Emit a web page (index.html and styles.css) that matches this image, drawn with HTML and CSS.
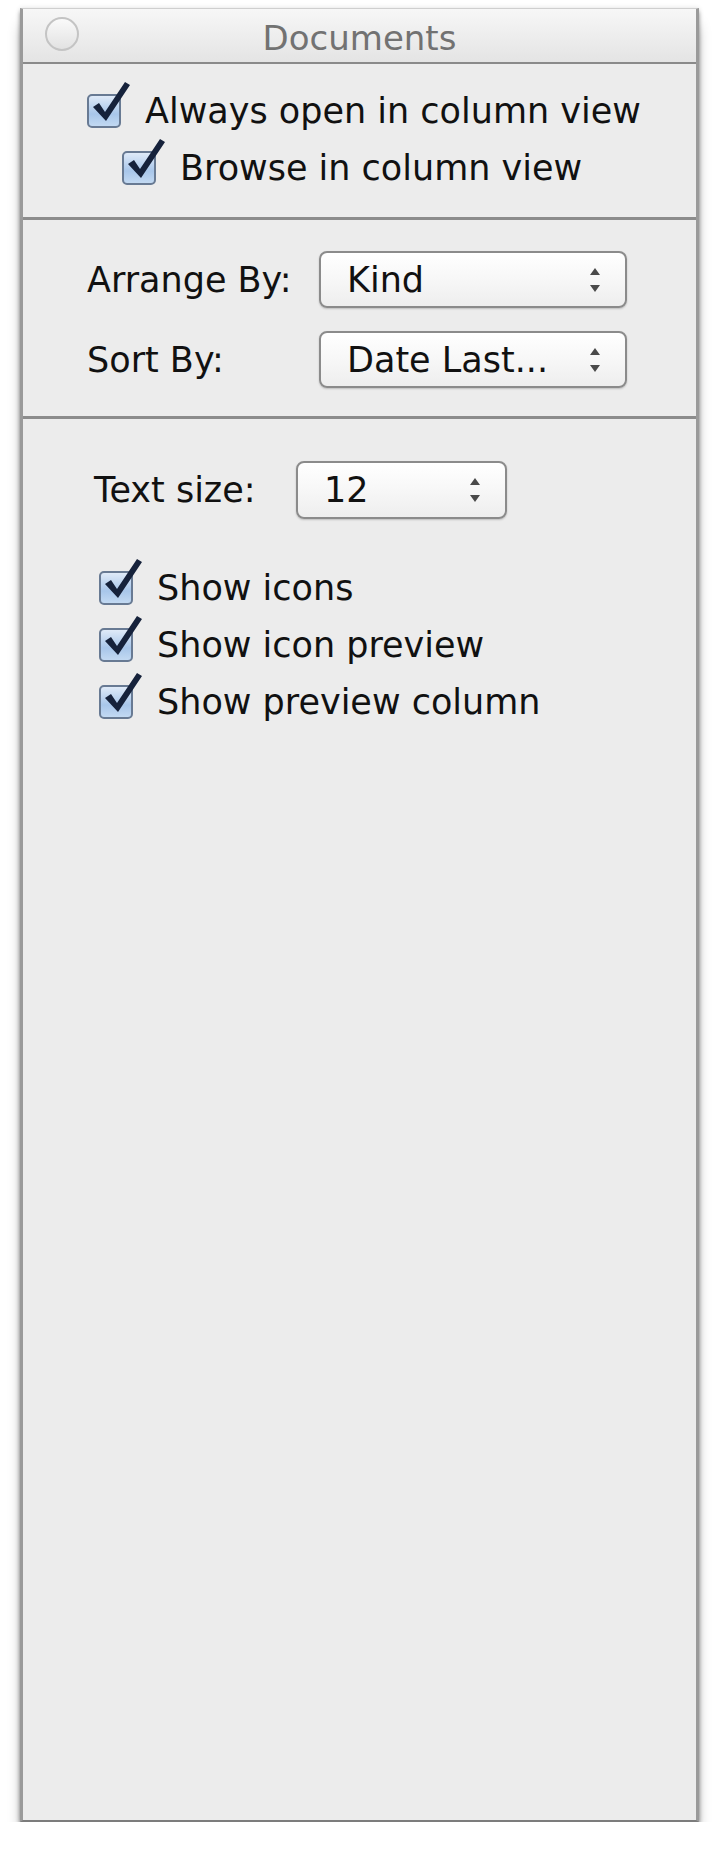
FILE: index.html
```html
<!DOCTYPE html>
<html lang="en">

<head>
   <meta charset="UTF-8">
   <meta name="viewport" content="width=device-width, initial-scale=1.0">
   <title>Documents</title>
   <link rel="stylesheet" href="styles.css">
</head>

<body>
   <div class="window">
      <!-- title bar -->
      <div class="titlebar">
         <span class="close-btn"></span>
         <span class="title">Documents</span>
      </div>

      <div class="section section-open">
         <div class="check-row">
            <span class="checkbox"><svg class="tick" viewBox="0 0 44 44"><path d="M6 19 L12 15 L18 24 L38 -6 L43 -3 L19 33 Z"/></svg></span>
            <span>Always open in column view</span>
         </div>
         <div class="check-row sub">
            <span class="checkbox"><svg class="tick" viewBox="0 0 44 44"><path d="M6 19 L12 15 L18 24 L38 -6 L43 -3 L19 33 Z"/></svg></span>
            <span>Browse in column view</span>
         </div>
      </div>

      <div class="section section-arrange">
         <div class="field-row">
            <span class="field-label">Arrange By:</span>
            <div class="popup wide">
               <span>Kind</span>
               <svg class="arrows" viewBox="0 0 10 24"><path d="M5 0 L10 7 L0 7 Z M0 17 L10 17 L5 24 Z"/></svg>
            </div>
         </div>
         <div class="field-row">
            <span class="field-label">Sort By:</span>
            <div class="popup wide">
               <span>Date Last...</span>
               <svg class="arrows" viewBox="0 0 10 24"><path d="M5 0 L10 7 L0 7 Z M0 17 L10 17 L5 24 Z"/></svg>
            </div>
         </div>
      </div>

      <div class="section section-view">
         <div class="field-row size-row">
            <span class="field-label">Text size:</span>
            <div class="popup small">
               <span>12</span>
               <svg class="arrows" viewBox="0 0 10 24"><path d="M5 0 L10 7 L0 7 Z M0 17 L10 17 L5 24 Z"/></svg>
            </div>
         </div>
         <div class="check-list">
            <div class="check-row">
               <span class="checkbox"><svg class="tick" viewBox="0 0 44 44"><path d="M6 19 L12 15 L18 24 L38 -6 L43 -3 L19 33 Z"/></svg></span>
               <span>Show icons</span>
            </div>
            <div class="check-row">
               <span class="checkbox"><svg class="tick" viewBox="0 0 44 44"><path d="M6 19 L12 15 L18 24 L38 -6 L43 -3 L19 33 Z"/></svg></span>
               <span>Show icon preview</span>
            </div>
            <div class="check-row">
               <span class="checkbox"><svg class="tick" viewBox="0 0 44 44"><path d="M6 19 L12 15 L18 24 L38 -6 L43 -3 L19 33 Z"/></svg></span>
               <span>Show preview column</span>
            </div>
         </div>
      </div>
   </div>
</body>

</html>
```

FILE: styles.css
```css
* {
   margin: 0;
   padding: 0;
   box-sizing: border-box;
   font-family: 'DejaVu Sans', 'Liberation Sans', sans-serif;
}

body {
   background: #ffffff;
   color: #111111;
   padding: 8px 0 0 20px;
}

.window {
   width: 679px;
   height: 1814px;
   display: flex;
   flex-direction: column;
   background: #ececec;
   border-left: 3px solid #9a9a9a;
   border-right: 3px solid #9a9a9a;
   border-top: 1px solid #cfcfcf;
   border-bottom: 2px solid #7c7c7c;
   box-shadow: 0 14px 14px -4px rgba(0, 0, 0, 0.45), 0 4px 4px rgba(0, 0, 0, 0.35), 0 0 5px rgba(0, 0, 0, 0.12);
}

/* title bar */
.titlebar {
   height: 55px;
   display: flex;
   align-items: center;
   justify-content: center;
   position: relative;
   background: linear-gradient(#f7f7f7, #e4e4e4);
   border-bottom: 2px solid #8a8a8a;
   padding-top: 4px;
}

.close-btn {
   position: absolute;
   left: 22px;
   top: 8px;
   width: 34px;
   height: 34px;
   border-radius: 50%;
   border: 2px solid #c4c4c4;
   background: linear-gradient(#fafafa, #e2e2e2);
}

.title {
   font-size: 34px;
   color: #727272;
}

.section {
   border-bottom: 3px solid #8c8c8c;
   font-size: 35px;
}

.section-open {
   padding: 18px 0 21px 64px;
}

.section-arrange {
   padding: 31px 0 28px 64px;
   display: flex;
   flex-direction: column;
   gap: 23px;
}

.section-view {
   flex: 1;
   border-bottom: none;
   padding: 42px 0 0 71px;
}

/* checkbox rows */
.check-row {
   height: 57px;
   display: flex;
   align-items: center;
}

.check-row.sub {
   padding-left: 35px;
}

.checkbox {
   position: relative;
   width: 34px;
   height: 34px;
   margin-right: 24px;
   flex-shrink: 0;
   border: 2px solid #687a93;
   border-radius: 5px;
   background: linear-gradient(#dfeaf8, #a8c6ea 60%, #c2d9f2);
}

.tick {
   position: absolute;
   left: -2px;
   top: -8px;
   width: 44px;
   height: 44px;
   overflow: visible;
}

.tick path {
   fill: #16223b;
}

.check-list {
   margin-top: 40px;
   padding-left: 5px;
}

/* popup buttons */
.field-row {
   display: flex;
   align-items: center;
}

.field-label {
   width: 232px;
}

.size-row .field-label {
   width: 202px;
}

.popup {
   height: 57px;
   display: flex;
   align-items: center;
   justify-content: space-between;
   padding: 0 25px 0 26px;
   border: 2px solid #8b8b8b;
   border-radius: 8px;
   background: linear-gradient(#ffffff, #f7f7f7 50%, #eeeeee);
   box-shadow: 0 1px 2px rgba(0, 0, 0, 0.2);
}

.popup.wide {
   width: 308px;
}

.popup.small {
   width: 211px;
   height: 58px;
}

.arrows {
   width: 10px;
   height: 24px;
}

.arrows path {
   fill: #4a4a4a;
}
```
